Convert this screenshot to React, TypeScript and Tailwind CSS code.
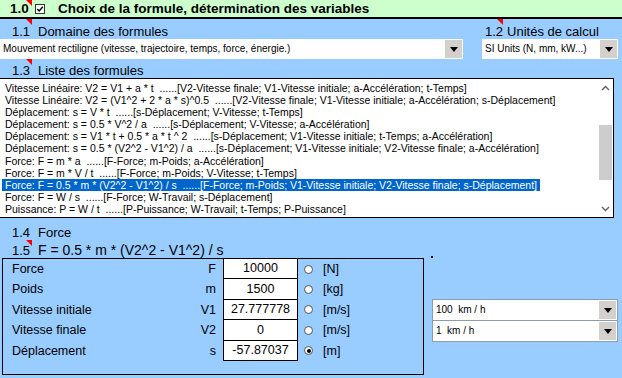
import React from 'react';

const formulas = [
  'Vitesse Linéaire: V2 = V1 + a * t  ......[V2-Vitesse finale; V1-Vitesse initiale; a-Accélération; t-Temps]',
  'Vitesse Linéaire: V2 = (V1^2 + 2 * a * s)^0.5  ......[V2-Vitesse finale; V1-Vitesse initiale; a-Accélération; s-Déplacement]',
  'Déplacement: s = V * t  ......[s-Déplacement; V-Vitesse; t-Temps]',
  'Déplacement: s = 0.5 * V^2 / a  ......[s-Déplacement; V-Vitesse; a-Accélération]',
  'Déplacement: s = V1 * t + 0.5 * a * t ^ 2  ......[s-Déplacement; V1-Vitesse initiale; t-Temps; a-Accélération]',
  'Déplacement: s = 0.5 * (V2^2 - V1^2) / a  ......[s-Déplacement; V1-Vitesse initiale; V2-Vitesse finale; a-Accélération]',
  'Force: F = m * a  ......[F-Force; m-Poids; a-Accélération]',
  'Force: F = m * V / t  ......[F-Force; m-Poids; V-Vitesse; t-Temps]',
  'Force: F = 0.5 * m * (V2^2 - V1^2) / s  ......[F-Force; m-Poids; V1-Vitesse initiale; V2-Vitesse finale; s-Déplacement]',
  'Force: F = W / s  ......[F-Force; W-Travail; s-Déplacement]',
  'Puissance: P = W / t  ......[P-Puissance; W-Travail; t-Temps; P-Puissance]',
];

const variables = [
  { label: 'Force', sym: 'F', value: '10000', unit: '[N]' },
  { label: 'Poids', sym: 'm', value: '1500', unit: '[kg]' },
  { label: 'Vitesse initiale', sym: 'V1', value: '27.777778', unit: '[m/s]' },
  { label: 'Vitesse finale', sym: 'V2', value: '0', unit: '[m/s]' },
  { label: 'Déplacement', sym: 's', value: '-57.87037', unit: '[m]', checked: true },
];

// red comment marker, top-right corner of a cell
const Mark: React.FC = () => (
  <span className="absolute top-0 right-0 w-0 h-0 border-t-[6px] border-l-[6px] border-t-[#ff0000] border-l-transparent" />
);

const DropButton: React.FC = () => (
  <div className="w-[17px] h-[18px] bg-[#d4d0cc] flex items-center justify-center">
    <span className="w-0 h-0 border-x-[4px] border-t-[5px] border-x-transparent border-t-black" />
  </div>
);

const Combo: React.FC<{ text: string; className?: string }> = ({ text, className = '' }) => (
  <div className={`flex items-center h-[20px] bg-white pr-[1px] ${className}`}>
    <span className="flex-1 pl-[3px] text-[10px] leading-none whitespace-pre">{text}</span>
    <DropButton />
  </div>
);

const Chevron: React.FC<{ up?: boolean }> = ({ up }) => (
  <svg width="9" height="6" viewBox="0 0 9 6">
    <polyline
      points={up ? '1,5 4.5,1.5 8,5' : '1,1 4.5,4.5 8,1'}
      fill="none"
      stroke="#606060"
      strokeWidth="1.4"
    />
  </svg>
);

const App: React.FC = () => {
  return (
    <div className="w-[622px] h-[378px] overflow-hidden bg-[#99ccff] text-black font-['Liberation_Sans',Arial,sans-serif]">
      {/* 1.0 header */}
      <div className="h-[19px] bg-[#ccffcc] border-b-2 border-black flex items-center text-[13.5px] font-bold leading-none">
        <div className="relative w-[32px] h-full flex items-center pl-[10px]">
          1.0
          <Mark />
        </div>
        <svg width="10" height="10" viewBox="0 0 10 10" className="ml-[3px]">
          <rect x="0.5" y="0.5" width="9" height="9" fill="white" stroke="#333" />
          <polyline points="2.2,5 4.2,7 7.8,2.8" fill="none" stroke="black" strokeWidth="1.5" />
        </svg>
        <span className="ml-[13px]">Choix de la formule, détermination des variables</span>
      </div>

      {/* 1.1 / 1.2 */}
      <div className="flex text-[13px] leading-[15px]">
        <div className="w-[463px]">
          <div className="h-[20px] flex items-stretch">
            <div className="relative w-[32px] pl-[12px] flex items-end">
              1.1
              <Mark />
            </div>
            <div className="pl-[6px] flex items-end">Domaine des formules</div>
          </div>
          <Combo text="Mouvement rectiligne (vitesse, trajectoire, temps, force, énergie.)" />
        </div>
        <div className="ml-[19px] w-[136px]">
          <div className="h-[20px] flex items-stretch">
            <div className="relative pl-[3px] flex items-end">
              1.2
              <Mark />
            </div>
            <div className="pl-[4px] flex items-end">Unités de calcul</div>
          </div>
          <Combo text="SI Units (N, mm, kW...)" />
        </div>
      </div>

      {/* 1.3 */}
      <div className="h-[19px] flex items-stretch text-[13px] leading-[15px]">
        <div className="relative w-[32px] pl-[12px] flex items-end">
          1.3
          <Mark />
        </div>
        <div className="pl-[6px] flex items-end">Liste des formules</div>
      </div>

      {/* formula list */}
      <div className="w-[614px] h-[140px] bg-white border-t border-b border-r border-black flex">
        <div className="flex-1 pt-[3px] pl-[2px] text-[10.5px] overflow-hidden">
          {formulas.map((f, i) => (
            <div key={i} className="h-[12.1px] leading-[12px] whitespace-pre">
              <span className={i === 8 ? 'px-[3px] bg-[#0066cc] text-white' : 'px-[3px]'}>{f}</span>
            </div>
          ))}
        </div>
        <div className="w-[16px] flex flex-col">
          <div className="h-[17px] flex items-center justify-center">
            <Chevron up />
          </div>
          <div className="flex-1">
            <div className="mt-[29px] ml-[2px] w-[13px] h-[55px] bg-[#cdcdcd]" />
          </div>
          <div className="h-[17px] flex items-center justify-center">
            <Chevron />
          </div>
        </div>
      </div>

      {/* 1.4 */}
      <div className="h-[22px] flex items-end text-[13px] leading-[15px]">
        <div className="w-[32px] pl-[12px]">1.4</div>
        <div className="pl-[6px]">Force</div>
      </div>

      {/* 1.5 */}
      <div className="h-[18px] flex items-stretch text-[13px] leading-[15px]">
        <div className="relative w-[32px] pl-[12px] flex items-end">
          1.5
          <Mark />
        </div>
        <div className="w-[399px] pl-[6px] flex items-end text-[14px]">F = 0.5 * m * (V2^2 - V1^2) / s</div>
        <div className="self-end w-[2px] h-[2px] bg-black" />
      </div>

      {/* variables */}
      <div className="flex items-start">
        <div className="ml-[2px] w-[422px] h-[117px] border border-black text-[12.5px] leading-none">
          {variables.map((v) => (
            <div key={v.label} className="h-[20.4px] flex items-center">
              <div className="w-[214px] flex justify-between pl-[9px] pr-[1px]">
                <span>{v.label}</span>
                <span>{v.sym}</span>
              </div>
              <div className="ml-[6px] w-[75px] h-full bg-white border-x border-b border-black flex items-center justify-center">
                {v.value}
              </div>
              <div className="ml-[6px] w-[9px] h-[9px] rounded-full bg-white border border-[#555] flex items-center justify-center">
                {v.checked && <div className="w-[4px] h-[4px] rounded-full bg-black" />}
              </div>
              <span className="ml-[10px]">{v.unit}</span>
            </div>
          ))}
        </div>
        <div className="ml-[8px] mt-[41px] w-[186px] border border-[#8a9cb0] bg-[#8a9cb0] flex flex-col gap-px">
          <Combo text="100  km / h" className="h-[19px]" />
          <Combo text="1  km / h" className="h-[18px]" />
        </div>
      </div>
    </div>
  );
};

export default App;
